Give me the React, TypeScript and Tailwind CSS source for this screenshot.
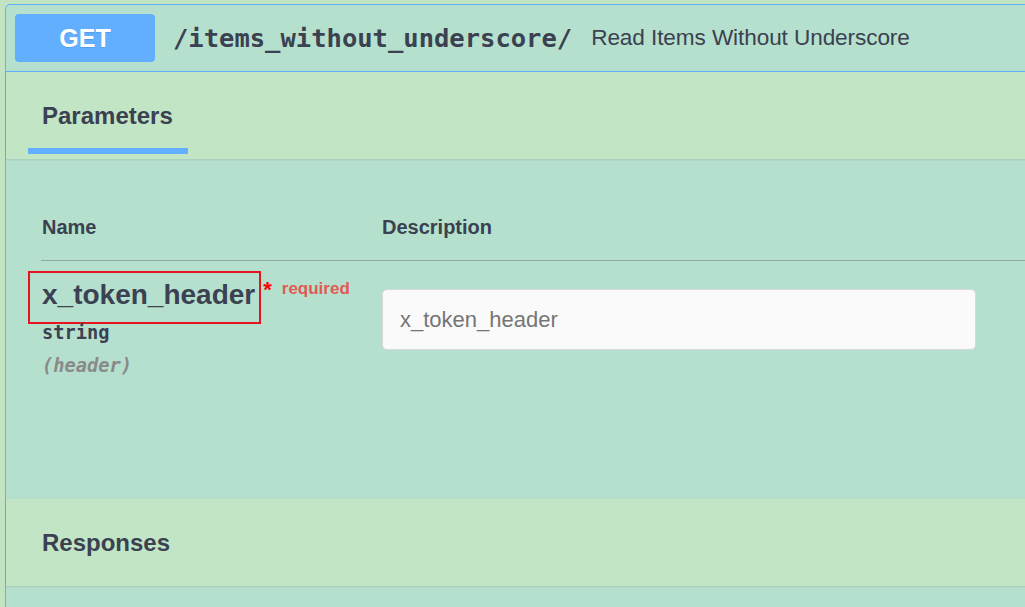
export default function App() {
    const sans = "font-['Liberation_Sans',Arial,sans-serif]";
    const mono = "font-['DejaVu_Sans_Mono',monospace]";

    return (
        <div className={`w-[1025px] h-[607px] overflow-hidden bg-[#c2e4c3] pt-[4px] pl-[5px] text-[#3b4151] ${sans}`}>
            <div className="w-[1040px] h-[640px] bg-[#b5e0cd] border border-[#61affe] rounded-tl-[5px]">
                {/* summary bar */}
                <div className="h-[67px] flex items-center pl-[9px] border-b border-[#61affe]">
                    <div className="w-[140px] h-[48px] rounded-[4px] bg-[#61affe] flex items-center justify-center text-white font-bold text-[25px] pt-[1px] [text-shadow:0_1px_0_rgba(0,0,0,0.1)]">
                        GET
                    </div>
                    <span className={`ml-[18px] font-bold text-[25.5px] ${mono}`}>/items_without_underscore/</span>
                    <span className="ml-[19px] text-[22.6px] tracking-[-0.1px]">Read Items Without Underscore</span>
                </div>

                {/* parameters tab header */}
                <div className="h-[87px] bg-[#c1e5c5] pl-[22px] shadow-[0_1px_2px_rgba(0,0,0,0.1)]">
                    <div className="w-[160px] pt-[28px]">
                        <div className="pl-[14px] h-[32px] leading-[32px] text-[24px] font-bold">Parameters</div>
                        <div className="mt-[16px] h-[6px] bg-[#61affe]" />
                    </div>
                </div>

                {/* parameters table */}
                <div className="h-[340px] pl-[35px]">
                    <div className="pt-[52px] pb-[17px] flex border-b border-[#8fab9e] text-[20px] font-bold leading-[32px]">
                        <div className="w-[341px] pl-[1px]">Name</div>
                        <div>Description</div>
                    </div>
                    <div className="flex">
                        <div className="w-[341px] pt-[10px]">
                            <div className="flex items-start">
                                <div className="-ml-[13px] border-2 border-[#e5141f] pl-[12px] pr-[4px] pt-[6px] pb-[11px] text-[28px] font-bold leading-[32px]">
                                    x_token_header
                                </div>
                                <span className="ml-[2px] mt-[9px] text-[#ff0000] text-[22px] font-bold leading-[20px]">*</span>
                                <span className="ml-[10px] mt-[8px] text-[#e15a55] text-[17px] font-bold leading-[20px]">required</span>
                            </div>
                            <div className={`pl-[1px] -mt-[3px] text-[18.7px] font-bold leading-[24px] ${mono}`}>string</div>
                            <div className={`pl-[1px] mt-[9px] text-[18.7px] font-bold italic leading-[24px] text-[#8a8a8a] ${mono}`}>(header)</div>
                        </div>
                        <div className="pt-[28px]">
                            <input
                                type="text"
                                placeholder="x_token_header"
                                className="w-[594px] h-[61px] rounded-[5px] border border-[#d9d9d9] bg-[#fafafa] px-[17px] text-[22px] placeholder:text-[#757575] outline-none"
                            />
                        </div>
                    </div>
                </div>

                {/* responses header */}
                <div className="h-[87px] bg-[#c1e5c5] pl-[36px] flex items-center shadow-[0_1px_2px_rgba(0,0,0,0.1)]">
                    <span className="text-[24px] font-bold">Responses</span>
                </div>
            </div>
        </div>
    );
}
